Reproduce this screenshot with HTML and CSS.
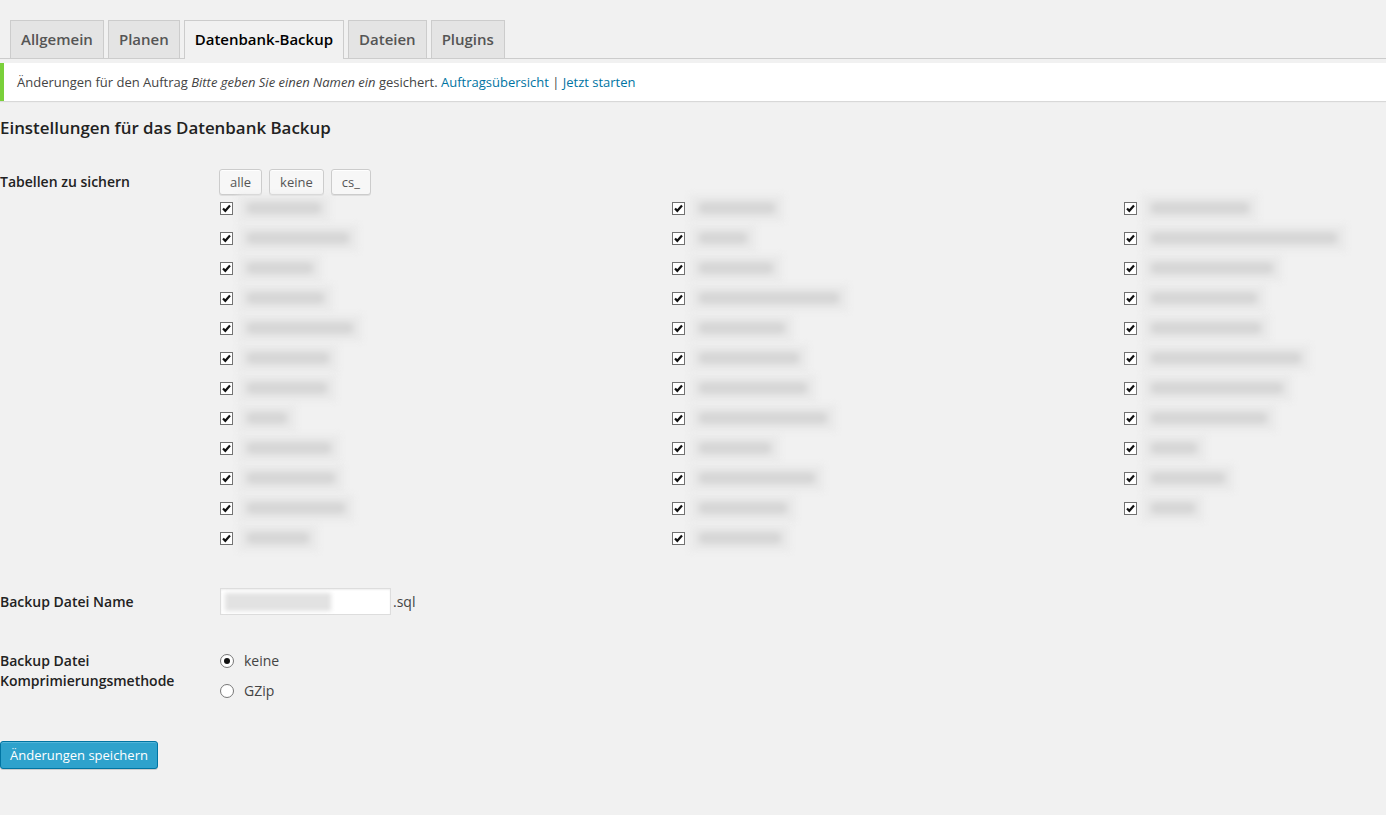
FILE: index.html
```html
<!DOCTYPE html>
<html lang="de">
<head>
<meta charset="utf-8">
<title>Datenbank-Backup</title>
<link rel="stylesheet" href="styles.css">
</head>
<body>
<h2 class="nav-tab-wrapper">
  <a class="nav-tab">Allgemein</a>
  <a class="nav-tab">Planen</a>
  <a class="nav-tab nav-tab-active">Datenbank-Backup</a>
  <a class="nav-tab">Dateien</a>
  <a class="nav-tab">Plugins</a>
</h2>

<div class="notice">
  <p>Änderungen für den Auftrag <em>Bitte geben Sie einen Namen ein</em> gesichert. <a href="#">Auftragsübersicht</a> | <a href="#">Jetzt starten</a></p>
</div>

<h3 class="section-title">Einstellungen für das Datenbank Backup</h3>

<div class="form-row row-tables">
  <div class="th">Tabellen zu sichern</div>
  <div class="td">
    <div class="btn-group">
      <button class="button">alle</button>
      <button class="button">keine</button>
      <button class="button">cs_</button>
    </div>
    <div class="table-grid">
      <div class="col">
        <div class="cb-item"><span class="cb"><svg viewBox="0 0 11 11"><path d="M2 5.5 L4.3 7.8 L9 2.6" /></svg></span><span class="blur" style="width:92px"></span></div>
        <div class="cb-item"><span class="cb"><svg viewBox="0 0 11 11"><path d="M2 5.5 L4.3 7.8 L9 2.6" /></svg></span><span class="blur" style="width:120px"></span></div>
        <div class="cb-item"><span class="cb"><svg viewBox="0 0 11 11"><path d="M2 5.5 L4.3 7.8 L9 2.6" /></svg></span><span class="blur" style="width:84px"></span></div>
        <div class="cb-item"><span class="cb"><svg viewBox="0 0 11 11"><path d="M2 5.5 L4.3 7.8 L9 2.6" /></svg></span><span class="blur" style="width:95px"></span></div>
        <div class="cb-item"><span class="cb"><svg viewBox="0 0 11 11"><path d="M2 5.5 L4.3 7.8 L9 2.6" /></svg></span><span class="blur" style="width:124px"></span></div>
        <div class="cb-item"><span class="cb"><svg viewBox="0 0 11 11"><path d="M2 5.5 L4.3 7.8 L9 2.6" /></svg></span><span class="blur" style="width:100px"></span></div>
        <div class="cb-item"><span class="cb"><svg viewBox="0 0 11 11"><path d="M2 5.5 L4.3 7.8 L9 2.6" /></svg></span><span class="blur" style="width:98px"></span></div>
        <div class="cb-item"><span class="cb"><svg viewBox="0 0 11 11"><path d="M2 5.5 L4.3 7.8 L9 2.6" /></svg></span><span class="blur" style="width:58px"></span></div>
        <div class="cb-item"><span class="cb"><svg viewBox="0 0 11 11"><path d="M2 5.5 L4.3 7.8 L9 2.6" /></svg></span><span class="blur" style="width:102px"></span></div>
        <div class="cb-item"><span class="cb"><svg viewBox="0 0 11 11"><path d="M2 5.5 L4.3 7.8 L9 2.6" /></svg></span><span class="blur" style="width:106px"></span></div>
        <div class="cb-item"><span class="cb"><svg viewBox="0 0 11 11"><path d="M2 5.5 L4.3 7.8 L9 2.6" /></svg></span><span class="blur" style="width:116px"></span></div>
        <div class="cb-item"><span class="cb"><svg viewBox="0 0 11 11"><path d="M2 5.5 L4.3 7.8 L9 2.6" /></svg></span><span class="blur" style="width:80px"></span></div>
      </div>
      <div class="col">
        <div class="cb-item"><span class="cb"><svg viewBox="0 0 11 11"><path d="M2 5.5 L4.3 7.8 L9 2.6" /></svg></span><span class="blur" style="width:94px"></span></div>
        <div class="cb-item"><span class="cb"><svg viewBox="0 0 11 11"><path d="M2 5.5 L4.3 7.8 L9 2.6" /></svg></span><span class="blur" style="width:66px"></span></div>
        <div class="cb-item"><span class="cb"><svg viewBox="0 0 11 11"><path d="M2 5.5 L4.3 7.8 L9 2.6" /></svg></span><span class="blur" style="width:92px"></span></div>
        <div class="cb-item"><span class="cb"><svg viewBox="0 0 11 11"><path d="M2 5.5 L4.3 7.8 L9 2.6" /></svg></span><span class="blur" style="width:158px"></span></div>
        <div class="cb-item"><span class="cb"><svg viewBox="0 0 11 11"><path d="M2 5.5 L4.3 7.8 L9 2.6" /></svg></span><span class="blur" style="width:104px"></span></div>
        <div class="cb-item"><span class="cb"><svg viewBox="0 0 11 11"><path d="M2 5.5 L4.3 7.8 L9 2.6" /></svg></span><span class="blur" style="width:118px"></span></div>
        <div class="cb-item"><span class="cb"><svg viewBox="0 0 11 11"><path d="M2 5.5 L4.3 7.8 L9 2.6" /></svg></span><span class="blur" style="width:126px"></span></div>
        <div class="cb-item"><span class="cb"><svg viewBox="0 0 11 11"><path d="M2 5.5 L4.3 7.8 L9 2.6" /></svg></span><span class="blur" style="width:146px"></span></div>
        <div class="cb-item"><span class="cb"><svg viewBox="0 0 11 11"><path d="M2 5.5 L4.3 7.8 L9 2.6" /></svg></span><span class="blur" style="width:90px"></span></div>
        <div class="cb-item"><span class="cb"><svg viewBox="0 0 11 11"><path d="M2 5.5 L4.3 7.8 L9 2.6" /></svg></span><span class="blur" style="width:134px"></span></div>
        <div class="cb-item"><span class="cb"><svg viewBox="0 0 11 11"><path d="M2 5.5 L4.3 7.8 L9 2.6" /></svg></span><span class="blur" style="width:106px"></span></div>
        <div class="cb-item"><span class="cb"><svg viewBox="0 0 11 11"><path d="M2 5.5 L4.3 7.8 L9 2.6" /></svg></span><span class="blur" style="width:100px"></span></div>
      </div>
      <div class="col">
        <div class="cb-item"><span class="cb"><svg viewBox="0 0 11 11"><path d="M2 5.5 L4.3 7.8 L9 2.6" /></svg></span><span class="blur" style="width:116px"></span></div>
        <div class="cb-item"><span class="cb"><svg viewBox="0 0 11 11"><path d="M2 5.5 L4.3 7.8 L9 2.6" /></svg></span><span class="blur" style="width:204px"></span></div>
        <div class="cb-item"><span class="cb"><svg viewBox="0 0 11 11"><path d="M2 5.5 L4.3 7.8 L9 2.6" /></svg></span><span class="blur" style="width:140px"></span></div>
        <div class="cb-item"><span class="cb"><svg viewBox="0 0 11 11"><path d="M2 5.5 L4.3 7.8 L9 2.6" /></svg></span><span class="blur" style="width:124px"></span></div>
        <div class="cb-item"><span class="cb"><svg viewBox="0 0 11 11"><path d="M2 5.5 L4.3 7.8 L9 2.6" /></svg></span><span class="blur" style="width:128px"></span></div>
        <div class="cb-item"><span class="cb"><svg viewBox="0 0 11 11"><path d="M2 5.5 L4.3 7.8 L9 2.6" /></svg></span><span class="blur" style="width:168px"></span></div>
        <div class="cb-item"><span class="cb"><svg viewBox="0 0 11 11"><path d="M2 5.5 L4.3 7.8 L9 2.6" /></svg></span><span class="blur" style="width:150px"></span></div>
        <div class="cb-item"><span class="cb"><svg viewBox="0 0 11 11"><path d="M2 5.5 L4.3 7.8 L9 2.6" /></svg></span><span class="blur" style="width:134px"></span></div>
        <div class="cb-item"><span class="cb"><svg viewBox="0 0 11 11"><path d="M2 5.5 L4.3 7.8 L9 2.6" /></svg></span><span class="blur" style="width:64px"></span></div>
        <div class="cb-item"><span class="cb"><svg viewBox="0 0 11 11"><path d="M2 5.5 L4.3 7.8 L9 2.6" /></svg></span><span class="blur" style="width:92px"></span></div>
        <div class="cb-item"><span class="cb"><svg viewBox="0 0 11 11"><path d="M2 5.5 L4.3 7.8 L9 2.6" /></svg></span><span class="blur" style="width:62px"></span></div>
      </div>
    </div>
  </div>
</div>

<div class="form-row row-filename">
  <div class="th">Backup Datei Name</div>
  <div class="td">
    <span class="text-input"><span class="input-blur"></span></span><span class="suffix">.sql</span>
  </div>
</div>

<div class="form-row row-compress">
  <div class="th">Backup Datei Komprimierungsmethode</div>
  <div class="td">
    <label class="radio-item"><span class="radio checked"></span>keine</label>
    <label class="radio-item"><span class="radio"></span>GZip</label>
  </div>
</div>

<div class="submit">
  <button class="button-primary">Änderungen speichern</button>
</div>
</body>
</html>
```
FILE: styles.css
```css
html, body {
  margin: 0;
  padding: 0;
  background: #f1f1f1;
}

body {
  font-family: "Open Sans", "Noto Sans", sans-serif;
  font-size: 13px;
  line-height: 1.4;
  color: #444;
  height: 815px;
  overflow: hidden;
}

a {
  color: #0074a2;
  text-decoration: none;
}

/* Tabs */
.nav-tab-wrapper {
  margin: 0;
  padding: 20px 0 0 10px;
  border-bottom: 1px solid #ccc;
  display: flex;
  gap: 4px;
  font-size: 15px;
  font-weight: 600;
  line-height: 24px;
}

.nav-tab {
  display: block;
  padding: 6px 10px;
  border: 1px solid #ccc;
  border-bottom: none;
  background: #e4e4e4;
  color: #555;
  margin-bottom: -1px;
  height: 25px;
}

.nav-tab-active {
  background: #f1f1f1;
  color: #000;
  height: 26px;
}

/* Notice */
.notice {
  margin: 4px 0 0;
  background: #fff;
  border-left: 4px solid #7ad03a;
  box-shadow: 0 1px 1px 0 rgba(0, 0, 0, 0.1);
  padding: 1px 12px 1px 13px;
}

.notice p {
  margin: 6px 0;
  padding: 2px 0;
  line-height: 20px;
  color: #444;
}

/* Heading */
.section-title {
  margin: 16px 0 0;
  font-size: 16.9px;
  font-weight: 600;
  color: #222;
  line-height: 22px;
}

/* Form rows */
.form-row {
  display: grid;
  grid-template-columns: 220px 1fr;
}

.th {
  font-size: 14px;
  font-weight: 600;
  color: #222;
  line-height: 20px;
}

.row-tables {
  margin-top: 30px;
}

.row-tables .th {
  padding-top: 3px;
}

.btn-group {
  display: flex;
  gap: 7px;
  margin-left: -1px;
}

.button {
  font-family: inherit;
  font-size: 13px;
  color: #555;
  background: #f7f7f7;
  border: 1px solid #ccc;
  border-radius: 3px;
  box-shadow: inset 0 1px 0 #fff, 0 1px 0 rgba(0, 0, 0, 0.08);
  height: 26px;
  padding: 0 10px 1px;
  line-height: 22px;
  cursor: pointer;
}

.table-grid {
  display: grid;
  grid-template-columns: 452px 452px 1fr;
  margin-top: -2px;
}

.cb-item {
  height: 30px;
  display: flex;
  align-items: center;
}

.cb {
  width: 11px;
  height: 11px;
  border: 1px solid #707070;
  background: #fff;
  display: flex;
  align-items: center;
  justify-content: center;
  flex: none;
}

.cb svg {
  width: 11px;
  height: 11px;
  fill: none;
  stroke: #111;
  stroke-width: 2.2;
}

.blur {
  display: flex;
  align-items: center;
  height: 26px;
  margin-left: 5px;
  background: #e9e9e9;
  filter: blur(3px);
}

.blur::after {
  content: "";
  flex: 1;
  height: 12px;
  margin: 0 8px;
  border-radius: 6px;
  background: #d6d6d6;
}

/* file name */
.row-filename {
  margin-top: 35px;
  align-items: center;
}

.text-input {
  display: inline-flex;
  align-items: center;
  vertical-align: middle;
  width: 169px;
  height: 25px;
  background: #fff;
  border: 1px solid #ddd;
  box-shadow: inset 0 1px 2px rgba(0, 0, 0, 0.07);
}

.input-blur {
  display: block;
  margin-left: 4px;
  width: 106px;
  height: 18px;
  background: #e2e2e2;
  filter: blur(2px);
}

.suffix {
  vertical-align: middle;
  font-size: 14px;
  color: #444;
  margin-left: 2px;
}

/* compression */
.row-compress {
  margin-top: 36px;
}

.radio-item {
  display: flex;
  align-items: center;
  height: 30px;
  font-size: 14px;
  color: #444;
  margin-top: -5px;
  margin-bottom: 5px;
}

.radio {
  width: 12px;
  height: 12px;
  border: 1px solid #777;
  border-radius: 50%;
  background: #fff;
  margin-right: 10px;
  display: flex;
  align-items: center;
  justify-content: center;
}

.radio.checked::after {
  content: "";
  width: 6px;
  height: 6px;
  border-radius: 50%;
  background: #111;
}

/* submit */
.submit {
  margin-top: 30px;
}

.button-primary {
  font-family: inherit;
  font-size: 13px;
  color: #fff;
  background: #2ea2cc;
  border: 1px solid #0074a2;
  border-radius: 3px;
  box-shadow: inset 0 1px 0 rgba(120, 200, 230, 0.5), 0 1px 0 rgba(0, 0, 0, 0.15);
  height: 28px;
  padding: 0 9px 1px;
  line-height: 24px;
  white-space: nowrap;
  cursor: pointer;
}
```
